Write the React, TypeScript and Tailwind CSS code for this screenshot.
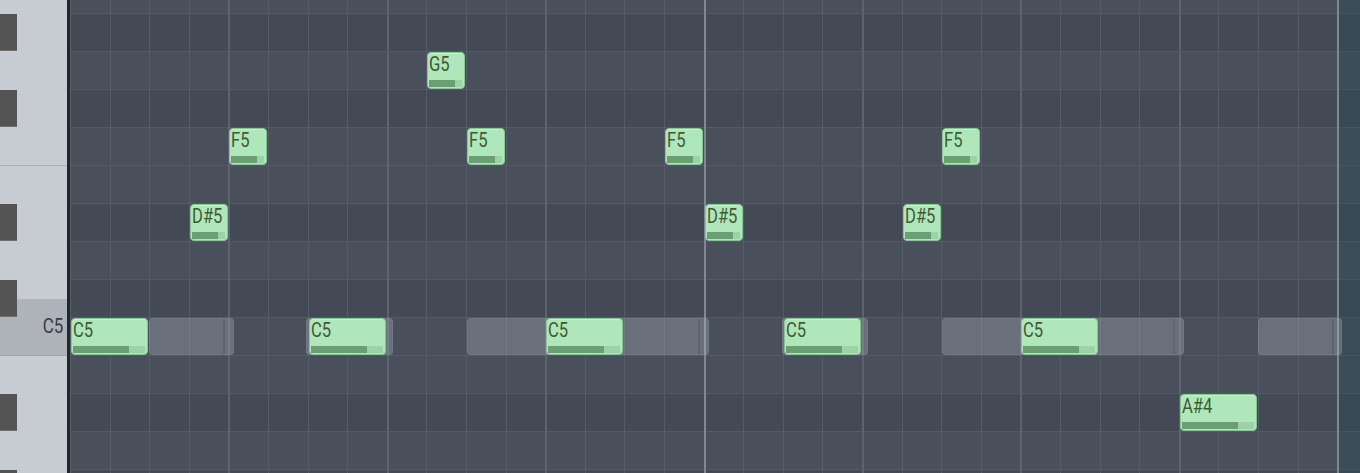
const STEP = 39.6

// piano roll rows, top to bottom (first one is cut off by the top edge)
const rows = [
  { name: 'A5', black: false, h: 13 },
  { name: 'G#5', black: true },
  { name: 'G5', black: false },
  { name: 'F#5', black: true },
  { name: 'F5', black: false },
  { name: 'E5', black: false },
  { name: 'D#5', black: true },
  { name: 'D5', black: false },
  { name: 'C#5', black: true },
  { name: 'C5', black: false },
  { name: 'B4', black: false },
  { name: 'A#4', black: true },
  { name: 'A4', black: false },
  { name: 'G#4', black: true },
]

const rowTop: Record<string, number> = {
  'G5': 51,
  'F5': 127,
  'D#5': 203,
  'C5': 317,
  'A#4': 393,
}

const blackKeys = [13, 89, 203, 279, 393, 469]

const notes = [
  { step: 0, len: 2, key: 'C5' },
  { step: 6, len: 2, key: 'C5' },
  { step: 12, len: 2, key: 'C5' },
  { step: 18, len: 2, key: 'C5' },
  { step: 24, len: 2, key: 'C5' },
  { step: 3, len: 1, key: 'D#5' },
  { step: 16, len: 1, key: 'D#5' },
  { step: 21, len: 1, key: 'D#5' },
  { step: 4, len: 1, key: 'F5' },
  { step: 10, len: 1, key: 'F5' },
  { step: 15, len: 1, key: 'F5' },
  { step: 22, len: 1, key: 'F5' },
  { step: 9, len: 1, key: 'G5' },
  { step: 28, len: 2, key: 'A#4' },
]

// ghost notes from another channel, in grid px: [left, right, inner split]
const ghosts: [number, number, number | null][] = [
  [79, 164, 152],
  [236, 323, null],
  [397, 639, 627],
  [712, 798, null],
  [872, 1114, 1102],
  [1188, 1272, 1261],
]

const labelFont = "font-['Roboto',sans-serif] inline-block origin-left scale-x-[0.83]"

const Keyboard = () => (
  <div className="relative w-[67px] h-full flex flex-col bg-[#c7cbd2] shrink-0">
    <div className="h-[165px]" />
    <div className="h-[134px] border-t border-[#a8acb3]" />
    <div className="h-[56px] bg-[#aeb2b9] flex items-center justify-end pr-[4px]">
      <span className="font-['Roboto',sans-serif] inline-block origin-right scale-x-[0.85] text-[20px] leading-none text-[#343d4b] -mt-[3px]">
        C5
      </span>
    </div>
    <div className="flex-1 border-t border-[#a0a4ab]" />
    {blackKeys.map((t) => (
      <div
        key={t}
        className="absolute left-0 w-[17px] h-[37px] bg-[#545454] border-b border-[#6f6f6f]"
        style={{ top: t + 1 }}
      />
    ))}
  </div>
)

const Note = ({ step, len, label }: { step: number; len: number; label: string }) => {
  const left = Math.round(STEP * step) + 1
  const width = Math.round(STEP * len) - 2
  return (
    <div
      className="absolute h-[37px] rounded-[4px] border border-[#88c595] bg-[#afe7bb] shadow-[inset_0_1px_0_#c4f0cd]"
      style={{ left, top: rowTop[label] + 1, width }}
    >
      <span className={`absolute left-[1px] top-[1px] ${labelFont} text-[20px] leading-none text-[#3f5a35]`}>
        {label}
      </span>
      <div className="absolute left-[1px] right-[2px] bottom-[1px] h-[7px] bg-[#9dd2a7]">
        <div className="h-full w-[78%] bg-[#6b9e73]" />
      </div>
    </div>
  )
}

export default function App() {
  const lines = Array.from({ length: 33 }, (_, k) => k)
  return (
    <div className="w-[1360px] h-[473px] flex overflow-hidden bg-[#4a505b]">
      <Keyboard />
      <div className="w-[3px] bg-[#1f292d] shrink-0" />
      <div className="relative flex-1 overflow-hidden">
        <div className="flex flex-col">
          {rows.map((r) => (
            <div
              key={r.name}
              className={`shrink-0 ${r.h ? 'h-[13px]' : 'h-[38px] border-t border-[#545b66]'} ${
                r.black ? 'bg-[#434955]' : 'bg-[#4a505b]'
              }`}
            />
          ))}
        </div>

        {/* area past the loop end */}
        <div className="absolute top-0 bottom-0 left-[1269px] right-0 bg-[#1b4955]/30" />

        {lines.map((k) => {
          const x = Math.round(STEP * k)
          const bar = k === 16
          const end = k === 32
          const beat = k % 4 === 0
          return (
            <div
              key={k}
              className={`absolute top-0 bottom-0 ${
                k === 0
                  ? 'w-[1px] bg-[#59606a]'
                  : end
                  ? 'w-[2px] bg-[#7a8a93]'
                  : bar
                  ? 'w-[2px] bg-[#7f8894]'
                  : beat
                  ? 'w-[2px] bg-[#5c636d]'
                  : 'w-[1px] bg-[#555c67]'
              }`}
              style={{ left: x }}
            />
          )
        })}

        {ghosts.map(([l, r, split]) => (
          <div
            key={l}
            className="absolute top-[318px] h-[37px] rounded-[4px] bg-[#b4bcc6]/30 border border-[#b4bcc6]/10"
            style={{ left: l, width: r - l }}
          >
            {split !== null && (
              <div className="absolute top-0 bottom-0 w-[2px] bg-black/10" style={{ left: split - l }} />
            )}
          </div>
        ))}

        {notes.map((n, i) => (
          <Note key={i} step={n.step} len={n.len} label={n.key} />
        ))}
      </div>
    </div>
  )
}
